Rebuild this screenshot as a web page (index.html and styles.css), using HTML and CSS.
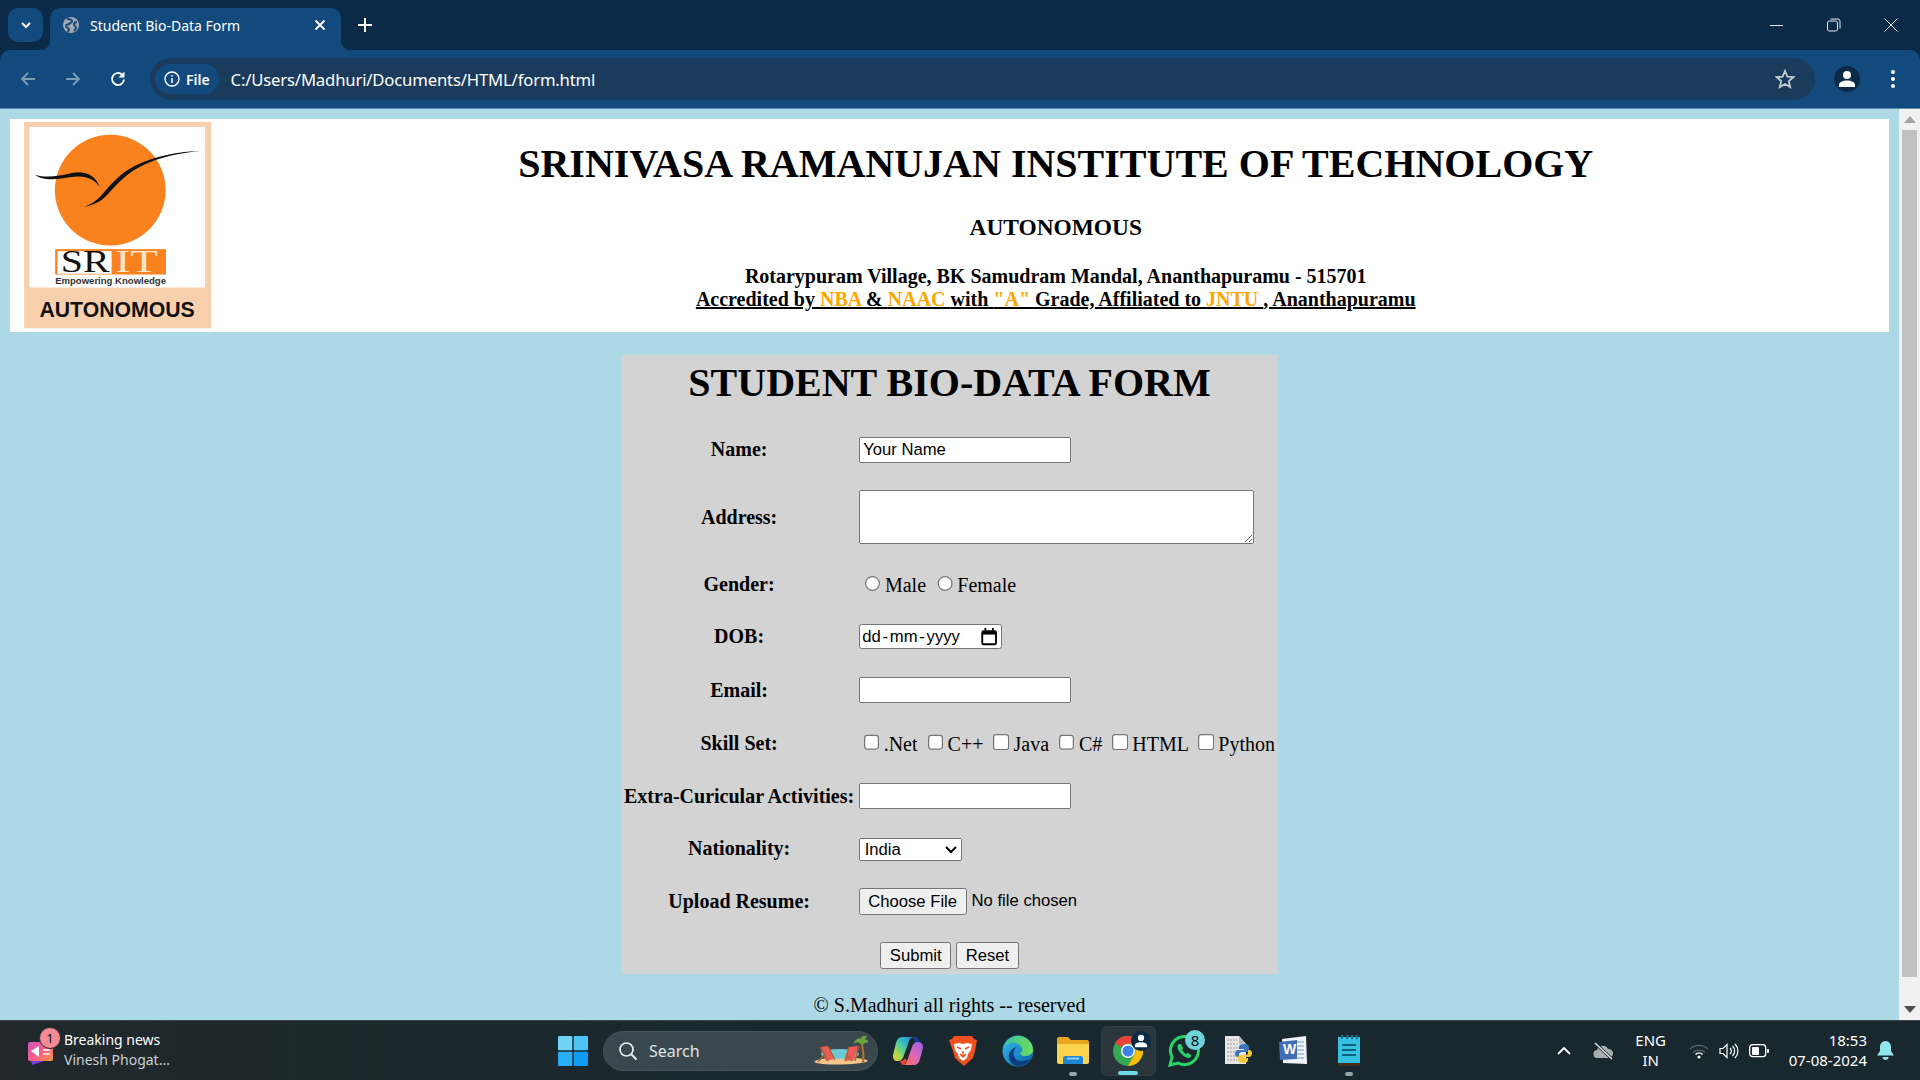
FILE: index.html
```html
<!DOCTYPE html>
<html lang="en">
<head>
<meta charset="utf-8">
<title>Student Bio-Data Form</title>
<link rel="stylesheet" href="styles.css">
</head>
<body>
<div class="screen">
  <div class="tabstrip">
    <button class="tablist" type="button"><svg width="12" height="12" viewBox="0 0 12 12"><path d="M2 4l4 4 4-4" fill="none" stroke="#fff" stroke-width="2"/></svg></button>
    <div class="tab">
      <svg class="favicon" width="18" height="18" viewBox="0 0 18 18"><circle cx="9" cy="9" r="8" fill="#a3a9af"/><path d="M5 2.500c2 1 4 .5 5 2s-2 2.500-3 3.500-3 0-3 2 3 1.500 3 3.500l-1 2.500M15 6c-2 0-3 1-3 2.500s2 1.500 2 3-1 2.500-2 3.500" fill="none" stroke="#134a7e" stroke-width="2"/></svg>
      <span class="tab-title">Student Bio-Data Form</span>
      <svg class="tab-close" width="12" height="12" viewBox="0 0 12 12"><path d="M1.500 1.500l9 9M10.500 1.500l-9 9" stroke="#fff" stroke-width="1.800"/></svg>
    </div>
    <svg class="newtab" width="14" height="14" viewBox="0 0 14 14"><path d="M7 0v14M0 7h14" stroke="#fff" stroke-width="2"/></svg>
    <div class="winctl">
      <svg width="14" height="14" viewBox="0 0 14 14"><path d="M0 7.500h13" stroke="#e6ebef"/></svg>
      <svg width="14" height="14" viewBox="0 0 14 14"><rect x=".5" y="3" width="10" height="10" rx="2" fill="none" stroke="#e6ebef"/><path d="M3.500 1h7.500a2 2 0 0 1 2 2v7.500" fill="none" stroke="#e6ebef"/></svg>
      <svg width="14" height="14" viewBox="0 0 14 14"><path d="M.5.500l13 13M13.500.500l-13 13" stroke="#e6ebef"/></svg>
    </div>
  </div>
  <div class="toolbar">
    <svg class="tool" width="18" height="18" viewBox="0 0 18 18"><path d="M16 9H3M9 3L3 9l6 6" fill="none" stroke="#7e9bb6" stroke-width="1.800"/></svg>
    <svg class="tool" width="18" height="18" viewBox="0 0 18 18"><path d="M2 9h13M9 3l6 6-6 6" fill="none" stroke="#7e9bb6" stroke-width="1.800"/></svg>
    <svg class="tool reload" width="18" height="18" viewBox="0 0 18 18"><path d="M15 9.500A6 6 0 1 1 13 4.500" fill="none" stroke="#fff" stroke-width="1.900"/><path d="M15.500 1.500v6h-6z" fill="#fff"/></svg>
    <div class="omnibox">
      <div class="chip">
        <svg width="16" height="16" viewBox="0 0 16 16"><circle cx="8" cy="8" r="7" fill="none" stroke="#fff" stroke-width="1.400"/><path d="M8 7v5M8 4v1.600" stroke="#fff" stroke-width="1.500"/></svg>
        <span>File</span>
      </div>
      <span class="url">C:/Users/Madhuri/Documents/HTML/form.html</span>
      <svg class="star" width="20" height="20" viewBox="0 0 20 20"><path d="M10 2l2.400 5.600 6 .5-4.600 4 1.400 6L10 15l-5.200 3.100 1.400-6-4.600-4 6-.5z" fill="none" stroke="#c4ccd3" stroke-width="1.800"/></svg>
    </div>
    <div class="avatar"><svg width="18" height="18" viewBox="0 0 18 18"><circle cx="9" cy="5" r="4" fill="#fff"/><path d="M1 17v-2c0-3 4-4.500 8-4.500s8 1.500 8 4.500v2z" fill="#fff"/></svg></div>
    <svg class="menu" width="6" height="20" viewBox="0 0 6 20"><circle cx="3" cy="3" r="2" fill="#fff"/><circle cx="3" cy="10" r="2" fill="#fff"/><circle cx="3" cy="17" r="2" fill="#fff"/></svg>
  </div>

  <div class="viewport">
    <main class="page">
      <header class="banner">
        <svg class="logo" viewBox="72 36 561 618" aria-label="SRIT logo">
          <rect x="72" y="36" width="561" height="618" fill="#f9d0ae"/>
          <rect x="88" y="51" width="526" height="481" fill="#fff"/>
          <circle cx="330" cy="240" r="166" fill="#f9821f"/>
          <path d="M104 193c30 12 70 6 110-4 40-8 72 6 84 42-14-24-44-36-84-30-40 6-84 14-110-8z" fill="#111"/>
          <path d="M605 122c-60 6-130 18-190 50-50 28-74 62-104 92-14 14-40 24-60 26 16-6 34-14 52-34 30-34 56-66 100-88 60-30 130-44 202-46z" fill="#111"/>
          <rect x="165" y="417" width="332" height="76" fill="#f9821f"/>
          <rect x="172" y="423" width="162" height="68" fill="#fff"/>
          <text class="logo-sr" x="182" y="486" textLength="146" lengthAdjust="spacingAndGlyphs">SR</text>
          <text class="logo-it" x="345" y="486" textLength="128" lengthAdjust="spacingAndGlyphs">IT</text>
          <text class="logo-emp" x="165" y="521" textLength="332" lengthAdjust="spacingAndGlyphs">Empowering Knowledge</text>
          <text class="logo-auto" x="118" y="620" textLength="465" lengthAdjust="spacingAndGlyphs">AUTONOMOUS</text>
        </svg>
        <div class="banner-text">
          <h1>SRINIVASA RAMANUJAN INSTITUTE OF TECHNOLOGY</h1>
          <h3>AUTONOMOUS</h3>
          <p class="address"><b>Rotarypuram Village, BK Samudram Mandal, Ananthapuramu - 515701</b></p>
          <p class="accredit"><b>Accredited by <span class="hl">NBA </span>&amp; <span class="hl">NAAC </span>with <span class="hl">"A" </span>Grade, Affiliated to <span class="hl">JNTU </span>, Ananthapuramu</b></p>
        </div>
      </header>

      <form>
        <table class="bio">
          <tr><td colspan="2" class="title-cell"><h2>STUDENT BIO-DATA FORM</h2></td></tr>
          <tr><th>Name:</th><td><input class="field" type="text" value="Your Name"></td></tr>
          <tr><th>Address:</th><td><textarea></textarea></td></tr>
          <tr><th>Gender:</th><td class="opts"><input type="radio" name="g">Male <input type="radio" name="g">Female</td></tr>
          <tr><th>DOB:</th><td>
            <div class="date"><span>dd - mm - yyyy</span>
              <svg width="13" height="14" viewBox="0 0 13 14"><rect x="1" y="2.500" width="11" height="10.500" rx="1" fill="none" stroke="#000" stroke-width="1.500"/><path d="M1 4h11" stroke="#000" stroke-width="2.500"/><path d="M3.500 0v2M9.500 0v2" stroke="#000" stroke-width="1.500"/></svg>
            </div>
          </td></tr>
          <tr><th>Email:</th><td><input class="field" type="email"></td></tr>
          <tr><th>Skill Set:</th><td class="opts"><input type="checkbox">.Net <input type="checkbox">C++ <input type="checkbox">Java <input type="checkbox">C# <input type="checkbox">HTML <input type="checkbox">Python</td></tr>
          <tr><th>Extra-Curicular Activities:</th><td><input class="field" type="text"></td></tr>
          <tr><th>Nationality:</th><td><select><option>India</option></select></td></tr>
          <tr><th>Upload Resume:</th><td><input type="file"></td></tr>
          <tr><td colspan="2" class="actions"><input type="submit" value="Submit"> <input type="reset" value="Reset"></td></tr>
        </table>
      </form>
      <p class="copyright">© S.Madhuri all rights -- reserved</p>
    </main>
    <div class="scrollbar">
      <div class="sb-btn"><svg width="12" height="7" viewBox="0 0 12 7"><path d="M6 0l6 7H0z" fill="#a3a3a3"/></svg></div>
      <div class="sb-track"><div class="sb-thumb"></div></div>
      <div class="sb-btn"><svg width="12" height="7" viewBox="0 0 12 7"><path d="M0 0h12L6 7z" fill="#505050"/></svg></div>
    </div>
  </div>

  <footer class="taskbar">
    <div class="news">
      <div class="news-icon">
        <svg width="25" height="24" viewBox="0 0 25 24"><defs><linearGradient id="nw" x1="0" y1="0" x2="1" y2="1"><stop offset="0" stop-color="#d94fc0"/><stop offset=".55" stop-color="#f4608a"/><stop offset="1" stop-color="#f89a3c"/></linearGradient></defs><path d="M2 14l14 6-12 4z" fill="#7a3fe0"/><rect x="0" y="1" width="25" height="19" rx="2" fill="url(#nw)"/><path d="M3 10l8-5v11z" fill="#fff"/><path d="M15 9h7M15 13h7" stroke="#fff" stroke-width="1.600"/></svg>
        <span class="news-badge">1</span>
      </div>
      <div class="news-text"><span>Breaking news</span><span class="sub">Vinesh Phogat...</span></div>
    </div>
    <div class="dock">
      <svg class="win" width="30" height="30" viewBox="0 0 30 30"><rect width="14.300" height="14.300" fill="#6fd3f7" rx="1"/><rect x="15.700" width="14.300" height="14.300" fill="#4cc2f5" rx="1"/><rect y="15.700" width="14.300" height="14.300" fill="#29aef5" rx="1"/><rect x="15.700" y="15.700" width="14.300" height="14.300" fill="#0f9cf5" rx="1"/></svg>
      <div class="search">
        <svg width="20" height="20" viewBox="0 0 20 20"><circle cx="8.500" cy="8.500" r="6.500" fill="none" stroke="#e8eef0" stroke-width="1.700"/><path d="M13 13l5.500 5.500" stroke="#e8eef0" stroke-width="1.900"/></svg>
        <span>Search</span>
        <svg class="beach" width="54" height="29" viewBox="0 0 54 29"><path d="M0 26c6-6 48-6 54-1-4 4-48 5-54 1z" fill="#f2c58c"/><ellipse cx="26" cy="18" rx="19" ry="5" fill="#6cc8d6"/><path d="M6 11l8-1 6 13-8 2z" fill="#ee5a55"/><path d="M7 11l7 14M14 10l7 14M4 26l6-7" stroke="#a8642c" stroke-width="1.300" fill="none"/><path d="M35 11l9-1-4 14-9 1z" fill="#ee5a55"/><path d="M45 10l-4 15M35 11l-4 14M32 18l6 7" stroke="#a8642c" stroke-width="1.300" fill="none"/><path d="M48 8c1 6 2 12 1 19" stroke="#a8702c" stroke-width="2.200" fill="none"/><path d="M48 8c-3-3-6-3-8-1 3-3 5-6 8-2-1-3 1-5 4-5-1 2-2 3-2 5 1-1 3-1 4 1-2-1-4 0-6 2z" fill="#6aa83c" stroke="#6aa83c" stroke-width="1.500"/></svg>
      </div>
      <div class="slot"><svg width="30" height="28" viewBox="0 0 30 28"><defs><linearGradient id="cp1" x1="1" y1="0" x2="0" y2="1"><stop offset="0" stop-color="#1d7fe6"/><stop offset=".45" stop-color="#3ec8b0"/><stop offset=".75" stop-color="#a8d84a"/><stop offset="1" stop-color="#f3c53c"/></linearGradient><linearGradient id="cp2" x1="1" y1="0" x2="0" y2="1"><stop offset="0" stop-color="#8f5ee6"/><stop offset=".5" stop-color="#e066b8"/><stop offset="1" stop-color="#f5784a"/></linearGradient></defs><path d="M22 0c-1 0-2 0-3 .500 3 .500 4 3 4 5l3 2c1-3-1-7.500-4-7.500z" fill="#1243a8"/><path d="M9 0h12c-2 0-4 1-5 4l-5 14c-1 4-3 6-6 6H4c-3 0-4.500-3-4-6L3 6C4 2 6 0 9 0z" fill="url(#cp1)"/><path d="M24 5h2c2.500 0 4.500 3 4 6l-3 11c-1 4-3 6-6 6H9c2 0 4-1 5-4l5-14c1-3 2.500-5 5-5z" fill="url(#cp2)"/><path d="M7 24c3 0 4-1 5-3l2 3c-1 2-3 4-5 4z" fill="#e8443a"/></svg></div>
      <div class="slot"><svg width="28" height="30" viewBox="0 0 28 30"><path d="M5 0h18l2 3 3 1-2 11-2 7-9 8-9-8-2-7L0 4l3-1z" fill="#f0501e"/><path d="M5 8l5-1 4 1 4-1 5 1-1 6-3 4-1 4-4 3-4-3-1-4-3-4z" fill="#fff"/><path d="M8 11l4 2M20 11l-4 2M14 15v6M11 18l3 3 3-3" stroke="#f0501e" stroke-width="1.400" fill="none"/></svg></div>
      <div class="slot"><svg width="32" height="32" viewBox="0 0 32 32"><defs><linearGradient id="ed1" x1="0" y1="0" x2="1" y2="1"><stop offset="0" stop-color="#35c1f1"/><stop offset="1" stop-color="#0c59a4"/></linearGradient><linearGradient id="ed2" x1="0" y1="0" x2="1" y2="0"><stop offset="0" stop-color="#35c1a0"/><stop offset="1" stop-color="#6fdc5a"/></linearGradient></defs><circle cx="16" cy="16" r="15.500" fill="url(#ed1)"/><path d="M2 12C4 5 10 1 16 1c9 0 15 7 15 14 0 4-4 6-8 6-3 0-5-1-5-3 2-1 3-3 2-5-2-4-7-6-11-5-3 1-5 2-7 4z" fill="url(#ed2)"/><path d="M28 24c-3 5-8 7-12 7-4 0-8-3-9-8-1-5 2-10 8-11-3 2-4 5-3 9 1 5 7 7 16 3z" fill="#0a3f7c"/></svg></div>
      <div class="slot"><svg width="32" height="27" viewBox="0 0 32 27"><path d="M0 2a2 2 0 0 1 2-2h9l3 3h16a2 2 0 0 1 2 2v3H0z" fill="#eaa520"/><path d="M0 7h32v18a2 2 0 0 1-2 2H2a2 2 0 0 1-2-2z" fill="#fbd34d"/><path d="M6 27v-6a2 2 0 0 1 2-2h16a2 2 0 0 1 2 2v6z" fill="#1f86d6"/><path d="M10 20.500h12v2H10z" fill="#8bd0f7"/></svg><i class="dot"></i></div>
      <div class="slot active">
        <svg width="30" height="30" viewBox="0 0 30 30"><circle cx="15" cy="15" r="15" fill="#34a853"/><path d="M15 0a15 15 0 0 1 13 7.500H15a7.500 7.500 0 0 0-6.500 3.750L2 7A15 15 0 0 1 15 0z" fill="#ea4335"/><path d="M28 7.500A15 15 0 0 1 15 30l6.500-11.250A7.500 7.500 0 0 0 15 7.500z" fill="#fbbc04"/><circle cx="15" cy="15" r="7" fill="#fff"/><circle cx="15" cy="15" r="5.500" fill="#3f7fea"/></svg>
        <span class="chrome-badge"><svg width="14" height="14" viewBox="0 0 18 18"><circle cx="9" cy="5" r="4" fill="#fff"/><path d="M1 17v-2c0-3 4-4.500 8-4.500s8 1.500 8 4.500v2z" fill="#fff"/></svg></span>
        <i class="bar"></i>
      </div>
      <div class="slot">
        <svg width="32" height="32" viewBox="0 0 32 32"><path d="M2 30l2-8A14 14 0 1 1 10 28z" fill="none" stroke="#25d366" stroke-width="3"/><path d="M11 9c-2 1-2 4 0 7s5 6 9 7c2 0 4-2 3-3l-3-2-2 1c-2-1-3-3-4-4l1-2-2-4z" fill="#25d366"/></svg>
        <span class="wa-badge">8</span>
      </div>
      <div class="slot"><svg width="29" height="30" viewBox="0 0 29 30"><path d="M1 0h14l7 8v20H1z" fill="#e6e6e6"/><path d="M15 0v8h7z" fill="#bbb"/><path d="M3 4h10M3 8h10M3 12h14M3 16h10M3 20h10M3 24h10" stroke="#999" stroke-dasharray="2 1"/><path d="M18 9c-3 0-5 1-5 3v2h5v1h-6c-2 0-3 2-3 4s1 3 3 3h1v-3c0-1 1-2 3-2h5c1 0 2-1 2-2v-3c0-2-2-3-5-3z" fill="#3774b8" transform="translate(2 -1)"/><path d="M19 27c3 0 5-1 5-3v-2h-5v-1h6c2 0 3-2 3-4s-1-3-3-3h-1v3c0 1-1 2-3 2h-5c-1 0-2 1-2 2v3c0 2 2 3 5 3z" fill="#f5c53a"/></svg></div>
      <div class="slot"><svg width="30" height="30" viewBox="0 0 30 30"><path d="M3 3l24-3 1 28-24-1z" fill="#f0f3f8"/><path d="M17 6h8M17 10h8M17 14h8M17 18h8M17 22h8" stroke="#9ab5dc" stroke-width="1.500"/><path d="M0 6l18-2v19L1 24z" fill="#3f6fb5"/><text class="word-w" x="4" y="18">W</text></svg></div>
      <div class="slot"><svg width="23" height="31" viewBox="0 0 23 31"><rect y="2" width="22" height="29" rx="1" fill="#4a2e1c"/><rect y="2" width="22" height="26" fill="#35c1e0"/><path d="M4 0v4M9 0v4M14 0v4M19 0v4" stroke="#1a6d8c" stroke-width="2"/><path d="M4 10h14M4 15h14M4 20h14" stroke="#0e5f80" stroke-width="2"/></svg><i class="dot"></i></div>
    </div>
    <div class="tray">
      <svg width="14" height="9" viewBox="0 0 14 9"><path d="M1 8l6-6 6 6" fill="none" stroke="#fff" stroke-width="1.800"/></svg>
      <svg class="cloud" width="22" height="18" viewBox="0 0 22 18"><path d="M6 16a4 4 0 0 1-1-8 6 6 0 0 1 11-1 4.500 4.500 0 0 1 1 9z" fill="#a8aeb1"/><path d="M3 1l17 16" stroke="#1b272e" stroke-width="3"/><path d="M3 1l17 16" stroke="#e8eef0" stroke-width="1.300"/></svg>
      <div class="lang"><span>ENG</span><span>IN</span></div>
      <svg class="wifi" width="20" height="16" viewBox="0 0 20 16"><path d="M1 6a13 13 0 0 1 18 0" fill="none" stroke="#5d686d" stroke-width="1.300"/><path d="M4 9.500a9 9 0 0 1 12 0" fill="none" stroke="#5d686d" stroke-width="1.300"/><path d="M6.500 11.500a5 5 0 0 1 7 0" fill="none" stroke="#fff" stroke-width="1.500"/><circle cx="10" cy="14" r="1.600" fill="#fff"/></svg>
      <svg class="sys" width="20" height="16" viewBox="0 0 20 16"><path d="M1 5.500h3l4-4v13l-4-4H1z" fill="none" stroke="#fff" stroke-width="1.200"/><path d="M11 5a4 4 0 0 1 0 6M13.500 3a7 7 0 0 1 0 10M16 1a10 10 0 0 1 0 14" fill="none" stroke="#fff" stroke-width="1.200"/></svg>
      <svg class="sys" width="20" height="14" viewBox="0 0 20 14"><rect x=".7" y=".7" width="16" height="12" rx="3" fill="none" stroke="#fff" stroke-width="1.300"/><rect x="3" y="3" width="7" height="8" rx="1" fill="#fff"/><rect x="18" y="5" width="2" height="4" rx="1" fill="#fff"/></svg>
      <div class="clock"><span>18:53</span><span>07-08-2024</span></div>
      <svg class="bell" width="17" height="20" viewBox="0 0 17 20"><path d="M8.500 0C5 0 3 3 3 6v4l-3 4.500h17L14 10V6c0-3-2-6-5.500-6z" fill="#8fe6ec"/><path d="M5.500 16h6c0 2-1.500 3-3 3s-3-1-3-3z" fill="#8fe6ec"/></svg>
    </div>
  </footer>
</div>
</body>
</html>
```

FILE: styles.css
```css
* { box-sizing: border-box; }
html, body { margin: 0; height: 100%; overflow: hidden; }
body { font-family: "Noto Sans", "Liberation Sans", sans-serif; }
.screen { display: flex; flex-direction: column; width: 1920px; height: 1080px; background: #0b2a47; }

/* browser frame */
.tabstrip { display: flex; align-items: flex-start; height: 50px; padding: 8px 0 0 8px; flex: none; background: #0b2a47; }
.tablist { display: flex; align-items: center; justify-content: center; width: 35px; height: 34px; padding: 0; border: 0; border-radius: 10px; background: #134a7e; }
.tab { position: relative; display: flex; align-items: center; width: 291px; height: 42px; margin-left: 7px; padding: 0 15px 8px 12px; border-radius: 10px 10px 0 0; background: #134a7e; color: #fff; }
.tab::before, .tab::after { content: ""; position: absolute; bottom: 0; width: 10px; height: 10px; }
.tab::before { left: -10px; background: radial-gradient(circle at 0 0, transparent 10px, #134a7e 10.500px); }
.tab::after { right: -10px; background: radial-gradient(circle at 100% 0, transparent 10px, #134a7e 10.500px); }
.favicon { flex: none; }
.tab-title { margin-left: 10px; font-size: 14px; white-space: nowrap; flex: 1; }
.newtab { margin: 10px 0 0 17px; }
.winctl { display: flex; gap: 43px; margin: 10px 22px 0 auto; align-items: center; }
.toolbar { display: flex; align-items: center; height: 59px; flex: none; padding: 0 24px 0 19px; border-radius: 10px 10px 0 0; background: #134a7e; border-bottom: 1px solid #5d8bb2; }
.tool { margin-right: 27px; flex: none; }
.tool.reload { margin-right: 23px; }
.omnibox { display: flex; align-items: center; flex: 1; height: 42px; padding: 0 20px 0 5px; border-radius: 21px; background: #1b3b5c; color: #fff; }
.chip { display: flex; align-items: center; gap: 6px; height: 30px; width: 64px; padding-left: 9px; border-radius: 15px; background: #134a7e; font-size: 14px; font-weight: 600; }
.url { margin-left: 11.500px; font-size: 16.700px; letter-spacing: -.17px; white-space: nowrap; flex: 1; }
.star { flex: none; }
.avatar { display: flex; align-items: center; justify-content: center; width: 26px; height: 26px; margin-left: 19px; border-radius: 50%; background: #0b2a47; flex: none; }
.menu { margin-left: 30px; flex: none; }

/* page */
.viewport { display: flex; flex: 1; min-height: 0; background: #add8e6; }
.page { flex: 1; min-width: 0; zoom: 1.25; padding: 8px 8px 0; font-family: "Liberation Serif", serif; font-size: 16px; color: #000; overflow: hidden; }
.banner { display: flex; align-items: center; height: 170.400px; background: #fff; padding: 2.400px 0 2.400px 11px; }
.logo { display: block; width: 150px; height: 165px; flex: none; }
.logo-sr { font: 400 94px "Liberation Serif", serif; fill: #111; }
.logo-it { font: 400 94px "Liberation Serif", serif; fill: #fde5cf; }
.logo-emp { font: 700 26px "Liberation Sans", sans-serif; fill: #333; }
.logo-auto { font: 700 65px "Liberation Sans", sans-serif; fill: #111; }
.banner-text { flex: 1; margin-left: 9px; text-align: center; }
.banner-text h1 { margin: 0 0 21.440px; font-size: 32px; }
.banner-text h3 { margin: 0 0 18.720px; font-size: 18.720px; }
.banner-text p { margin: 0; }
.accredit { text-decoration: underline; }
.hl { color: orange; }

.bio { margin: 18px auto 0; background: lightgray; border-collapse: separate; border-spacing: 2px 0; }
.bio th, .bio td { padding: 11px 1px; }
.bio .title-cell { padding: 0 1px; text-align: center; }
.title-cell h2 { margin: 4px 0 13.700px; font-size: 32px; line-height: 37px; }
.bio .actions { padding: 11px 1px 4px; text-align: center; }
.bio input, .bio select, .bio textarea, .date { font-family: "Liberation Sans", sans-serif; font-size: 13.333px; }
.bio .field { width: 169.600px; height: 21px; }
.bio select { width: 83px; height: 18.500px; }
.bio textarea { display: block; width: 316px; height: 43.200px; padding: 2px; }
.date { display: flex; align-items: center; justify-content: space-between; width: 114.400px; height: 20px; padding: 0 3px 0 2px; border: 1px solid #767676; border-radius: 2px; background: #fff; white-space: nowrap; }
.date span { word-spacing: -2.300px; }
.copyright { margin: 16px 0 0; text-align: center; }

.scrollbar { display: flex; flex-direction: column; width: 21px; flex: none; background: #f1f1f1; }
.sb-btn { display: flex; align-items: center; justify-content: center; height: 21px; flex: none; }
.sb-track { flex: 1; padding: 0 3px 22px; }
.sb-thumb { height: 100%; background: #c1c1c1; }

/* taskbar */
.taskbar { display: flex; align-items: center; height: 60px; flex: none; border-top: 1px solid #3b4549; background: linear-gradient(90deg, #20282b, #19282f 40%, #19282f); color: #fff; font-family: "Noto Sans", sans-serif; }
.news { display: flex; align-items: center; width: 558px; padding-left: 28px; flex: none; font-size: 14px; }
.news-icon { position: relative; width: 25px; height: 24px; margin-top: 4px; }
.news-icon svg { display: block; }
.news-badge { position: absolute; top: -14px; left: 11px; width: 22px; height: 22px; border: 1px solid #2a3033; border-radius: 50%; background: #f48a94; color: #111; font-size: 13px; line-height: 20px; text-align: center; }
.news-text { display: flex; flex-direction: column; margin: 0 0 2px 11px; line-height: 20px; font-size: 14px; }
.news-text .sub { color: #c9cfd2; }
.dock { display: flex; align-items: center; height: 100%; }
.win { flex: none; }
.search { display: flex; align-items: center; width: 275px; height: 40px; margin: 0 2px 0 15px; padding: 0 9px 0 14px; border: 1px solid #47545a; border-radius: 20px; background: #3a474e; font-size: 16px; color: #dfe5e7; }
.search span { margin-left: 11px; flex: 1; }
.slot { position: relative; display: flex; align-items: center; justify-content: center; width: 55.200px; height: 50px; flex: none; }
.slot.active { background: #2a363c; border-radius: 6px; border: 1px solid #323e44; }
.dot { position: absolute; bottom: 0; left: 50%; width: 8px; height: 4px; margin-left: -4px; border-radius: 2px; background: #9aa3a8; }
.bar { position: absolute; bottom: 0; left: 50%; width: 20px; height: 4px; margin-left: -10px; border-radius: 2px; background: #6fd8e6; }
.chrome-badge { position: absolute; top: 4px; right: 4px; display: flex; align-items: center; justify-content: center; width: 20px; height: 20px; border-radius: 50%; background: #0b2a47; }
.wa-badge { position: absolute; top: 4px; right: 6px; width: 20px; height: 20px; border-radius: 50%; background: #6fd3dc; color: #111; font-size: 15px; line-height: 20px; text-align: center; }
.word-w { font: 700 14px "Liberation Sans", sans-serif; fill: #fff; }
.tray { display: flex; align-items: center; margin-left: auto; padding-right: 26px; }
.cloud { margin-left: 21px; }
.lang { display: flex; flex-direction: column; align-items: center; width: 40px; margin: 0 18px 2px 17px; font-size: 15px; line-height: 20px; }
.sys { margin-left: 10px; }
.clock { display: flex; flex-direction: column; align-items: flex-end; margin: 0 0 2px 20px; font-size: 15px; line-height: 20px; }
.bell { margin-left: 10px; }
```
